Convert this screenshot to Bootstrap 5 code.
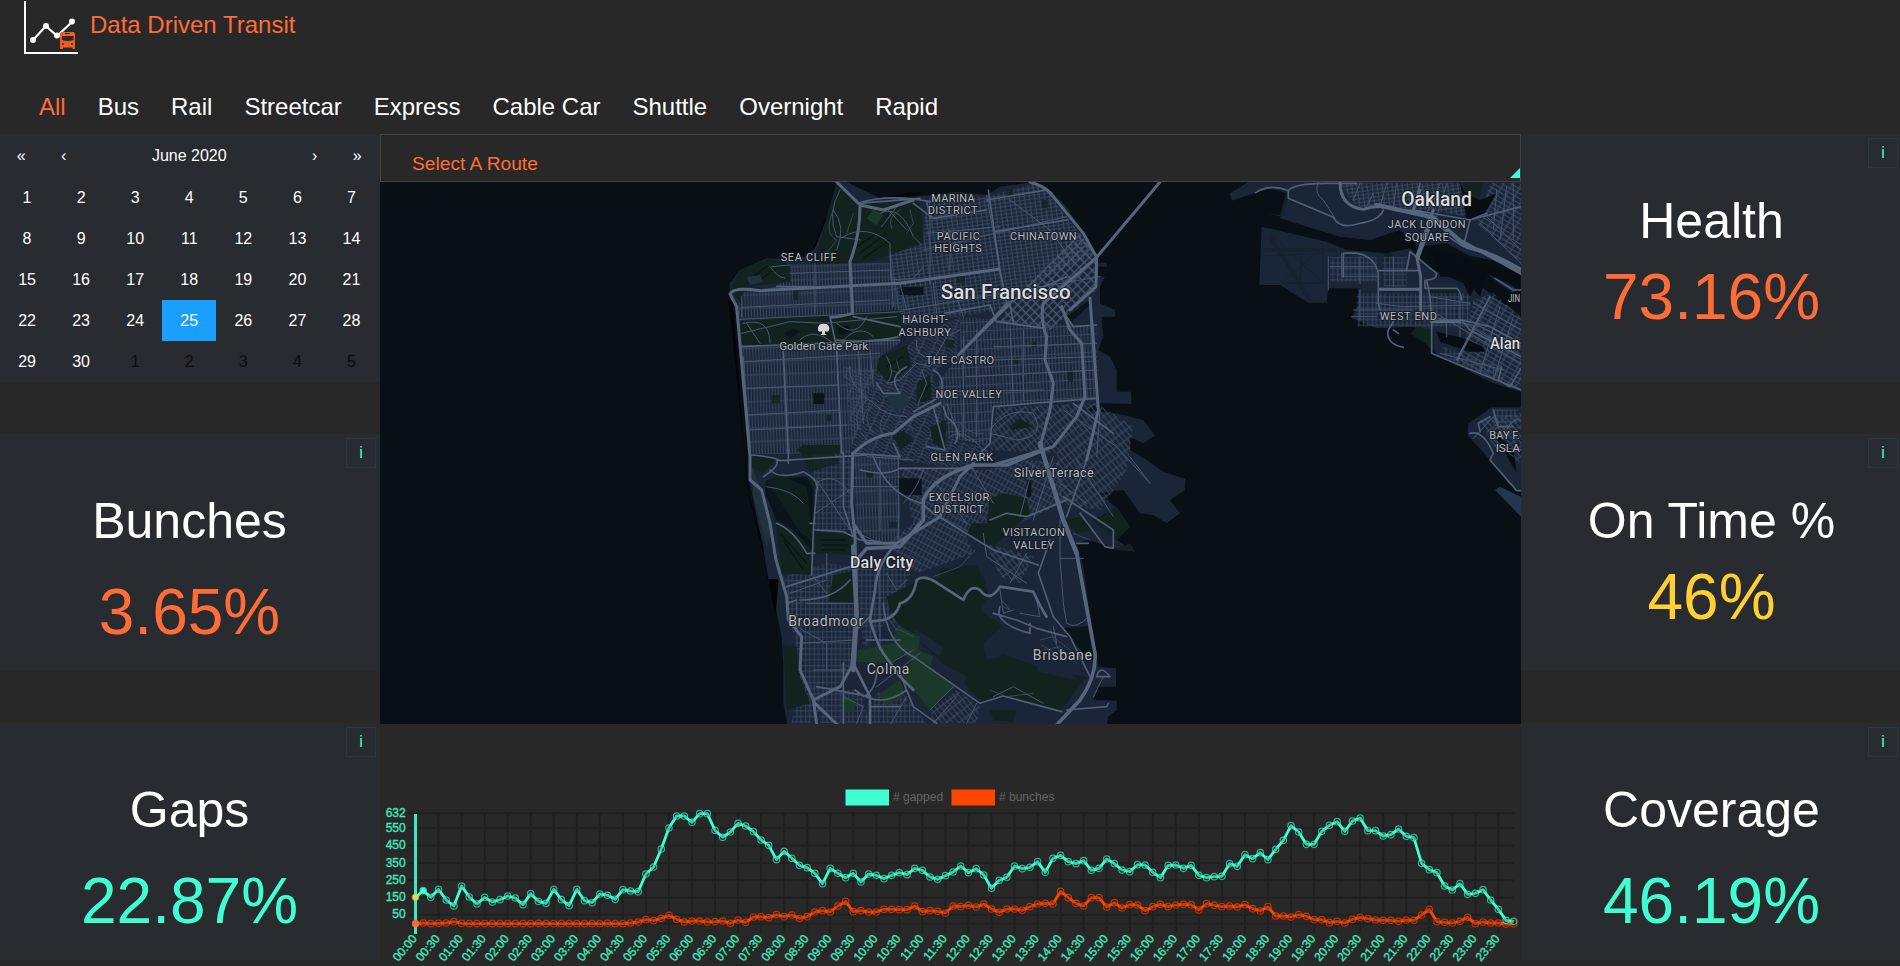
<!DOCTYPE html>
<html lang="en">
<head>
<meta charset="utf-8">
<title>Data Driven Transit</title>
<link href="https://cdn.jsdelivr.net/npm/bootstrap@5.3.0/dist/css/bootstrap.min.css" rel="stylesheet">
<style>
body{background:#282828;color:#fff;font-family:"Liberation Sans",Arial,sans-serif;font-size:16px;overflow:hidden;height:966px}
.brandbar{height:80px;padding-left:24px}
.brandbar svg{width:56px;height:56px;flex:none}
.brandbar h1{font-size:24px;line-height:28px;color:#ff6c37;margin:11px 0 0 10px;font-weight:400}
.modes{height:54px;padding:12px 0 0 23px}
.modes .nav-link{color:#fff;font-size:24px;line-height:30px;padding:0 16px}
.modes .nav-link.active{color:#ff6c37}
.board{height:832px;width:1902px}
.side{width:380px;gap:52px}
.side.right{width:381px}
.middle{width:1141px}
.panel{background:#282b30;position:relative;text-align:center;height:237px;padding-top:57px}
.panel.first-row{height:248px}
.panel h2{font-size:50px;line-height:60px;margin:0;font-weight:400}
.panel p{font-size:64px;line-height:74px;margin:0;padding-top:24px}
.panel.tight p{padding-top:9px}
.left .panel{padding-right:1px}
.orange{color:#ff6c37}.mint{color:#3fffd0}.gold{color:#ffcf33}
.info-btn{position:absolute;top:4px;right:4px;width:30px;height:30px;border:1px solid #29383b;color:#3fffd0;background:none;border-radius:0;padding:0;font-size:16px;line-height:26px}
.cal{background:#282b30;height:248px;padding-right:1.5px}
.cal-head{height:43px;line-height:44px;text-align:center}
.cal-head span{width:42.500px}
.cal-grid{display:grid;grid-template-columns:repeat(7,1fr);grid-auto-rows:41px;text-align:center;line-height:41px}
.cal-grid .out{color:#0c0d0e}
.cal-grid .on{background:#1a9fff}
.route{height:48px;border:1px solid #444;color:#ff6c37;font-size:19.2px;line-height:22px;padding:18px 0 0 31px;position:relative}
.route::after{content:"";position:absolute;right:0;bottom:3px;border-left:10px solid transparent;border-bottom:10px solid #3fffd0}
.middle svg{display:block}
#map text{font-family:Roboto,"Open Sans",sans-serif;fill:#b9bbbd;font-size:33px;text-anchor:middle;paint-order:stroke;stroke:#111923;stroke-width:5px;stroke-linejoin:round}
#map .town{font-size:42px}#map .city{font-weight:500;fill:#dcdcdc}
#map text.st{text-anchor:start}
.major,.mid,.fine{fill:none;stroke:#56657b;stroke-linejoin:round;stroke-linecap:round}
.major{stroke-width:9}.mid{stroke-width:5;stroke:#505f76}.fine{stroke-width:3;stroke:#485770}
#chart text{font-family:"Liberation Sans",Arial,sans-serif;font-size:12px}
#chart .tick{fill:#3fe8bd;stroke:#3fe8bd;stroke-width:.35px}
#chart .key{fill:#666}
</style>
<script src="https://cdn.jsdelivr.net/npm/bootstrap@5.3.0/dist/js/bootstrap.bundle.min.js"></script>
</head>
<body>
<header>
  <div class="brandbar d-flex align-items-start">
    <svg viewBox="24 0 56 56"><path d="M25 1V53H78" fill="none" stroke="#fff" stroke-width="2"/><path d="M33 40 46 26 57 36 72 22" fill="none" stroke="#fff" stroke-width="2.2"/><g fill="#fff"><circle cx="33" cy="40" r="3"/><circle cx="46" cy="26" r="3"/><circle cx="57" cy="35.500" r="3"/><circle cx="72" cy="21.500" r="3"/></g><path fill="#f15a22" d="M61 32H74L75 34V49H72.500V47.500H63V49H60V34Z"/><path fill="#282828" d="M65 33H70V34H65ZM62 36H73.500V40Q68 42 62 40Z"/><circle cx="63" cy="44" r=".9" fill="#282828"/><circle cx="72" cy="44" r=".9" fill="#282828"/></svg>
    <h1>Data Driven Transit</h1>
  </div>
  <nav class="nav modes">
    <a class="nav-link active">All</a><a class="nav-link">Bus</a><a class="nav-link">Rail</a><a class="nav-link">Streetcar</a><a class="nav-link">Express</a><a class="nav-link">Cable Car</a><a class="nav-link">Shuttle</a><a class="nav-link">Overnight</a><a class="nav-link">Rapid</a>
  </nav>
</header>
<main class="board d-flex">
  <aside class="side left d-flex flex-column">
    <div class="cal">
      <div class="cal-head d-flex"><span>«</span><span>‹</span><div class="flex-fill">June 2020</div><span>›</span><span>»</span></div>
      <div class="cal-grid" id="days"></div>
    </div>
    <div class="panel"><button class="info-btn">i</button><h2>Bunches</h2><p class="orange">3.65%</p></div>
    <div class="panel"><button class="info-btn">i</button><h2>Gaps</h2><p class="mint">22.87%</p></div>
  </aside>
  <section class="middle">
    <div class="route">Select A Route</div>
    <svg id="map" width="1141" height="542" viewBox="380 182 1141 542">
      <defs>
        <pattern id="sunset" width="9" height="40" patternUnits="userSpaceOnUse" patternTransform="rotate(-2)"><path d="M4 0V40M0 20H9" stroke="#3a4961" stroke-width="2.800"/></pattern>
        <pattern id="north" width="15" height="11" patternUnits="userSpaceOnUse" patternTransform="rotate(-8)"><path d="M7 0V11M0 5H15" stroke="#3d4c64" stroke-width="2.600"/></pattern>
        <pattern id="soma" width="21" height="17" patternUnits="userSpaceOnUse" patternTransform="rotate(-45)"><path d="M10 0V17M0 8H21" stroke="#4a5971" stroke-width="3.800"/></pattern>
        <pattern id="mission" width="10" height="27" patternUnits="userSpaceOnUse" patternTransform="rotate(-3)"><path d="M5 0V27M0 13H10" stroke="#3d4c64" stroke-width="2.700"/></pattern>
        <pattern id="hills" width="34" height="30" patternUnits="userSpaceOnUse" patternTransform="rotate(25)"><path d="M0 5Q17-6 34 5M0 15Q17 4 34 15M0 25Q17 14 34 25M8 0Q15 15 8 30" fill="none" stroke="#3c4b63" stroke-width="2.400"/></pattern>
        <pattern id="south" width="12" height="19" patternUnits="userSpaceOnUse" patternTransform="rotate(28)"><path d="M6 0V19M0 9H12" stroke="#3c4b63" stroke-width="2.600"/></pattern>
        <pattern id="east" width="13" height="24" patternUnits="userSpaceOnUse" patternTransform="rotate(-38)"><path d="M6 0V24M0 9H13" stroke="#3e4d65" stroke-width="2.600"/></pattern>
        <pattern id="eastbay" width="13" height="24" patternUnits="userSpaceOnUse" patternTransform="rotate(-60)"><path d="M6 0V24M0 9H13" stroke="#3e4d65" stroke-width="2.800"/></pattern>
        <pattern id="suburb" width="26" height="17" patternUnits="userSpaceOnUse"><path d="M5 0V17M17 0V17M0 8H26" stroke="#3a4961" stroke-width="2.500"/></pattern>
      </defs>
      <rect x="380" y="182" width="1141" height="542" fill="#080f15"/>
      <g transform="translate(700 170) scale(.33333)">
        <path fill="#020406" d="M84 370 100 415 133 850 143 960 185 1110 205 1235 205 1225H240L250 1300 225 1330 190 1150 147 980ZM378 140 340 235 352 240 385 160ZM480 60 540 86 620 70 680 68 560 92 490 75Z"/>
        <path fill="#1a2537" d="M410 36 378 150 345 235 300 270 200 265 120 300 90 340 88 372 105 410 120 530 135 700 148 860 150 940 170 1040 190 1130 205 1227H236L228 1320 245 1400 250 1480 250 1600 262 1665H1220L1225 1640 1250 1620V1592L1180 1590 1195 1550H1248V1495L1195 1490 1188 1440 1165 1300 1150 1190 1130 1120 1165 1110 1245 1135 1305 1145 1250 1110 1290 1070 1245 1010 1200 970 1270 960 1320 1030 1360 1035 1400 1060 1440 1030 1410 990 1455 960 1450 925 1390 905 1340 870 1290 840 1290 800 1330 820 1365 797 1330 750 1250 730 1150 720 1200 700 1295 702 1293 665 1250 665 1250 600 1230 560 1195 540 1210 500 1205 440 1245 440V420L1200 400 1200 350 1215 320 1195 318 1195 290 1220 290V278L1190 278 1190 255 1150 190 1100 110 1050 60 990 38 900 50 860 75 770 65 640 80 540 85 440 36Z"/>
        <path fill="url(#sunset)" d="M270 282 570 278 608 420 120 448 112 370 230 350ZM125 530 610 510 540 560 450 850 152 852ZM455 860H600V990L600 1115H540L470 1080Z"/>
        <path fill="url(#north)" d="M565 245 670 220 672 150 690 80 860 80 1000 42 1040 62 1185 250 1000 340 900 420 600 465 575 330Z"/>
        <path fill="url(#soma)" d="M1140 190 1190 260 1188 360 1050 480 900 460 925 400Z"/>
        <path fill="url(#mission)" d="M780 440 900 450 1190 470 1195 690 880 712 870 830 740 800 710 640 780 555Z"/>
        <path fill="url(#hills)" d="M430 590 560 600 650 500 780 440 770 560 700 610 740 800 870 840 800 900 460 850Z"/>
        <path fill="url(#south)" d="M600 890 860 900 980 870 1080 880 1085 1000 960 1060 800 1100 820 1150 650 1210 560 1120 640 1060Z"/>
        <path fill="url(#east)" d="M890 712 1190 700 1300 770 1280 900 1200 1020 1080 1000 1070 850 870 840ZM560 1340 610 1330 680 1390 670 1410 590 1390ZM860 1120 1000 1160 960 1240 900 1220ZM690 1620 770 1560 840 1610 830 1660 700 1660Z"/>
        <path fill="url(#suburb)" d="M340 850H455V1080H345ZM250 1220 380 1180 460 1190V1480L330 1660H275L300 1480 265 1330ZM470 1190 640 1180 600 1300 490 1440ZM530 1570 600 1560 680 1660H500ZM350 1560 480 1560 510 1660H360Z"/>
        <g fill="#12231f">
          <path d="M412 36 470 100 560 100 660 90 670 220 510 275 340 284 378 150ZM120 300 210 265 270 285 270 335 130 352 92 360ZM120 455 600 420 615 510 125 525ZM100 360 130 365 125 410ZM540 560 620 525 635 590 570 640 530 600ZM650 640 690 615 695 690 650 700ZM690 770 740 750 735 840 700 820ZM580 800 610 780 640 810 600 840ZM930 770 960 745 1000 770 930 780ZM290 840 310 825 420 825 420 850 310 855ZM152 850 230 865 190 910 155 890Z"/>
          <path d="M195 940 240 910 345 930 340 1120 335 1215 245 1210 228 1060ZM345 1085 455 1095 455 1155 345 1150ZM400 1215 455 1205 465 1298 385 1295ZM870 985 910 970 980 985 990 1030 880 1130 800 1095 815 1060 860 1060ZM720 1195 830 1185 850 1230 720 1250ZM560 1280 640 1240 650 1225 720 1225 850 1220 865 1275 840 1320 910 1370 850 1440 930 1460 1040 1500 1160 1520 1080 1625 900 1575 850 1600 740 1490 640 1400 590 1360 570 1320ZM250 1425 290 1430 300 1520 330 1600 260 1620ZM1095 1050 1140 1040 1185 1080 1130 1090ZM1250 1010 1290 1070 1250 1110 1180 1050ZM1290 1120 1305 1145 1240 1140ZM870 1620 950 1620 940 1655 880 1650Z"/>
          <path d="M280 360h16v30h-16ZM770 318h25v22h-25ZM920 60h20v20h-20ZM1025 90h18v25h-18ZM735 510h28v25h-28ZM995 515h16v16h-16ZM1105 600h14v35h-14ZM215 675h25v25h-25ZM380 735h14v18h-14ZM940 565h16v16h-16ZM500 905h18v18h-18ZM570 1055h22v18h-22ZM330 905 420 880 400 850 300 845Z" opacity=".8"/>
        </g>
        <path fill="none" stroke="#0a1612" stroke-width="4" d="M480 250 560 190M490 265 570 210M470 230 530 190M240 1090 320 1180M250 1110 310 1200M360 1110H440M365 1125H445M365 1140H440M220 300 180 330M205 285 160 320M560 590 610 560M660 690 690 640"/>
        <path fill="#0a151b" d="M200 930 320 920 340 960 335 1140 280 1080 230 1050 195 970ZM340 670h32v32h-32ZM600 350h70v25h-70ZM250 490l30-15 20 10-30 20ZM412 475l30-10 15 20-40 10ZM980 930h14v50h-14ZM595 925h70v50h-70ZM1100 440 1170 390 1175 400 1110 460ZM1095 1373 1170 1368 1185 1480 1100 1400Z"/>
        <path fill="#12231f" d="M200 935 250 920 320 950 340 1120 300 1085 240 990Z" opacity=".75"/>
        <path fill="#1a2537" d="M850 1420 860 1470 900 1460 950 1400 905 1370ZM1010 1490 1100 1490 1130 1530 1015 1505ZM640 1375 730 1430 720 1460 650 1410ZM720 1520 745 1490 800 1520 790 1550Z"/>
        <path fill="#1c3829" d="M500 145 520 118 550 135 530 165ZM600 1370 660 1400 655 1440 700 1460 690 1490 640 1480 575 1410ZM475 1440 605 1415 615 1450 570 1480 470 1475ZM650 1465 765 1550 690 1620 600 1510ZM535 1575 600 1530 615 1575 560 1610ZM430 1590 465 1585V1625H430Z"/>
        <path fill="#203240" d="M560 675 610 665 630 700 600 725 570 710ZM140 320 180 315 190 335 150 345ZM1145 505h25v25h-25ZM155 890 185 960 215 1080 200 1130 160 980Z"/>
        <g class="fine">
          <path d="M420 60Q380 130 410 200L480 210M400 120Q440 170 410 240M430 200Q500 160 570 220L572 330 640 325 670 290M540 130Q600 100 640 200L665 225M565 120 620 180M590 110 545 170M210 290Q230 320 255 325M215 290 270 285M125 490 270 455 375 460 590 440M140 460 180 520M130 460Q210 440 210 520M300 510Q340 470 400 520M410 460Q470 510 500 440M430 510Q480 460 520 500M120 448 608 425M128 412 570 390M125 378V440M270 310 570 300M345 280V430M570 250 580 410M600 340 620 420M135 575 540 550M138 655 415 645M145 735 420 720M150 780 440 765M510 540 520 650M130 560 150 840M475 530 490 760M860 75 905 330M750 180V300M690 120V340M670 240 1100 140M680 190 900 170M930 90 1050 180 1100 250M610 420 1200 320M760 350 790 440M700 340 710 430M790 500V800M830 480V800M930 470 940 700M970 480V690M880 530 1190 520M880 570 1190 560M800 620 1190 600M720 665 1030 660M650 510Q640 580 740 560M560 560Q590 610 560 640L600 630 650 580 690 590 740 500 780 480M450 590Q440 640 520 700Q560 740 620 740M655 700 680 640 665 600M740 700 780 800M750 800Q790 770 850 840M870 780Q920 710 1000 730Q1040 800 950 810L870 790M610 1000Q650 960 670 900M455 950H590M540 870V1080M595 850V1110M500 860 640 870M455 1080 540 1120M350 930 450 1080M345 1030 450 960M350 940Q400 900 450 970M200 950Q280 960 310 1000M700 930 800 1060M820 900 880 1000M1000 880 960 1040M1060 860 1000 1050M1200 720 1190 860M1090 720 1250 830 1350 940M1130 870 1240 1040M1290 860 1350 940M1080 940 1160 1000M850 1090 860 1160 980 1240M980 1150 930 1240M1080 1050V1165H1150M1080 1165 1090 1300 1100 1360Q1130 1380 1165 1340M900 1260 910 1330 940 1320M1010 1290 1020 1340 960 1330M560 1210 590 1260 620 1230M270 1270 380 1230V1150M290 1290V1370L380 1420V1500M320 1300 460 1300M300 1420 460 1410M340 1500 460 1500M380 1270 340 1220M540 1200V1440M570 1480 640 1440M530 1550 660 1450M690 1620 760 1550M1070 1420 1060 1370M880 1580 940 1550 1030 1600M800 1660 830 1600M430 1580 490 1610 470 1660M700 1660 770 1580M1180 1580 1210 1520M570 1665 620 1580"/>
          <path d="M400 120Q370 190 410 210L380 250M460 130 440 190M600 120Q560 140 575 175M630 120 640 160 620 190M590 570 600 610 570 600M590 760Q610 740 640 780M500 690Q440 740 500 810M520 700Q480 740 520 790M560 720Q520 780 560 800M765 780Q810 830 850 810M780 760Q820 800 850 790M1020 1410 1060 1400 1110 1440M1030 1440 1080 1430 1130 1480M1050 1380 1080 1450M1025 1425 1100 1470M870 1560 920 1580 1000 1570M905 1290 930 1320 910 1310M1120 1090 1170 1110M600 1380 640 1400M700 1220 780 1190 825 1140" stroke-width="2"/>
        </g>
        <g class="mid">
          <path d="M230 350 340 350M475 100 660 85M475 100Q560 70 690 95M640 100 700 145 860 120M860 90 1040 60M680 95 690 145M885 185 1100 150M865 60 900 300 920 400M410 540 425 850M120 530 600 510M250 540 265 860M390 440 405 510 410 540M600 470 460 440M600 500Q500 520 410 510M735 430 870 405 890 455 1035 475M780 550 920 400 1100 320M930 400 940 460M1080 410 1120 470 1190 465M700 600Q740 620 720 680L640 725M620 590Q560 620 600 670L550 670 530 640M730 710 740 740Q790 780 765 820M700 710 735 840 680 830M880 710 870 820 840 850M880 710 1060 695 1190 685M1120 700 1240 790M460 850 600 860 580 820M155 855Q220 860 240 872L500 855M265 840V880M430 850V1010L460 1100M345 1080 430 1085 480 1110 540 1115M190 920Q240 890 230 870M210 900Q240 930 310 905Q360 930 350 960L340 1080 335 1215M230 1060Q280 1080 320 1150L345 1150M260 1250 450 1190M520 860Q560 970 665 1000L700 1030 880 1140 1015 1185M480 900Q560 920 600 895H820M870 1050 920 1030 980 1040 1100 990M1160 870 1100 1040M1090 980 1240 1080V1135L1215 1130 1140 1030M1130 1120H1165M880 1330 950 1350 1010 1375 1100 1400M900 1310Q880 1360 990 1390V1360M1050 1110 1015 1210 1060 1340 1110 1400 1170 1520M350 1550 510 1580M290 1290 260 1300M550 1300Q560 1420 640 1460L840 1600 910 1578 1085 1625M465 1560Q540 1620 620 1560M600 1510 640 1610 710 1660M500 1410H600M470 1380 510 1340M430 1480V1660M1190 1520Q1200 1480 1230 1520H1190M1100 1620 1220 1610 1225 1600M510 1610 600 1610"/>
          <path d="M330 1060H345M490 1580Q530 1560 530 1500M300 1290Q400 1290 450 1230"/>
        </g>
        <g class="major">
          <path d="M410 36 480 105Q480 200 450 275L458 430M90 372Q100 350 180 362L600 340 895 298M90 372 110 410 150 860 150 930 185 960 210 1060 228 1170 260 1280 265 1350 305 1400 300 1500 345 1600 410 1662M458 430Q420 440 395 442M480 105 550 120 640 90M1380 36 1190 262 1030 400Q1020 450 1040 500L1035 570 1060 640 1050 720 1020 830M990 36Q1040 50 1060 80L1150 190 1190 262 1188 350 1110 420M775 555 925 405M1085 410 1110 480 1145 520 1155 680M1170 385 1195 720 1160 870M1155 680 1130 740 1060 830 880 885M460 850Q510 800 580 790L640 740Q700 710 720 700M458 850 455 1000 465 1100 470 1300 455 1490 420 1550 340 1590 350 1662M460 1060 500 1120H590L720 1040 780 920 820 880"/>
          <path stroke-width="8" d="M590 1120Q530 1180 525 1260L510 1350Q530 1420 550 1450L600 1520M640 1560 600 1520M510 1355 550 1350Q590 1340 600 1300 640 1290 650 1230 675 1210 720 1245L790 1290Q810 1240 840 1260 870 1300 900 1250L1000 1265Q1020 1310 1040 1340M460 1480 510 1580V1660"/>
          <path stroke-width="14" d="M460 1130 470 1330 460 1500M1020 820 1090 1050 1130 1150"/>
          <path stroke-width="11" d="M1130 1150 1185 1450Q1190 1520 1140 1590L1070 1665M1020 845 920 885H820Q700 920 670 990L670 1050 600 1130 500 1135 470 1170"/>
        </g>
        <text x="759" y="96" textLength="130">MARINA</text><text x="758" y="133" textLength="150">DISTRICT</text><text x="775" y="209" textLength="130">PACIFIC</text><text x="774" y="246" textLength="143">HEIGHTS</text><text x="1030" y="210" textLength="200">CHINATOWN</text><text x="326" y="273" textLength="168">SEA CLIFF</text><text x="675" y="460" textLength="137">HAIGHT-</text><text x="674" y="498" textLength="157">ASHBURY</text><text x="371" y="539" textLength="267" style="font-size:35px">Golden Gate Park</text><text x="780" y="581" textLength="205">THE CASTRO</text><text x="806" y="683" textLength="199">NOE VALLEY</text><text x="785" y="873" textLength="187">GLEN PARK</text><text x="1061" y="920" textLength="240" style="font-size:38px">Silver Terrace</text><text x="777" y="993" textLength="182">EXCELSIOR</text><text x="776" y="1030" textLength="150">DISTRICT</text><text x="1001" y="1099" textLength="187">VISITACION</text><text x="1001" y="1137" textLength="122">VALLEY</text>
        <text class="city" x="917" y="386" textLength="390" style="font-size:62px">San Francisco</text><text class="city" x="545" y="1195" textLength="190" style="font-size:48px">Daly City</text><text class="town" x="377" y="1368" textLength="225">Broadmoor</text><text class="town" x="1087" y="1469" textLength="177">Brisbane</text><text class="town" x="564" y="1511" textLength="128">Colma</text>
        <path fill="#d5d6d8" stroke="#111923" stroke-width="3" paint-order="stroke" d="M366 491V484Q352 488 354 474 356 460 371 461 386 460 388 474 388 488 375 484V491L380 495H361Z"/>
      </g>
      <g transform="translate(1180 130) scale(.33333)">
        <path fill="#1a2537" d="M150 190 205 156H1023V430L990 400 870 378 800 340 720 350 660 300 570 330 480 320 300 265 320 190 270 175 155 212ZM245 290 440 335 500 360 620 370 690 355 760 420 850 460 870 500 890 460 1023 560V785L940 760 770 675 750 620 700 590 590 595 515 565 535 520V475H445L440 518H385L300 465H238ZM935 832H1023V1085L985 1060 930 990 862 915 865 880ZM925 420Q960 420 1010 480L1000 490 930 440ZM0 1045H18L12 1080H0Z"/>
        <path fill="#22364f" d="M945 1080 960 1070 1023 1100V1160Z"/>
        <path fill="#12231f" d="M320 180 300 255 255 250 305 260 325 200ZM850 156H910L900 200 855 190ZM690 610 710 590 760 600 765 670 735 640ZM750 475H840V490H750ZM490 362 520 370 500 380ZM610 370 640 370 620 395Z"/>
        <path fill="url(#eastbay)" d="M930 160H1023V400L890 280ZM880 510 940 490 1023 560V780L840 700Z"/>
        <path fill="url(#east)" d="M900 870 1023 850V1000L940 950Z"/>
        <path fill="url(#north)" d="M480 160H840L860 260 760 240 530 230Z"/><path fill="url(#suburb)" d="M450 380H590V455H450ZM610 380H680V470H610ZM530 490H870V590H530ZM790 650 960 710 950 750 790 680ZM940 838H1015V880H940Z"/>
        <path fill="#060e13" d="M840 156 855 190 900 210 950 190 920 240 910 265 860 270ZM750 355 900 400 1023 430V480L920 430 900 500 850 440 780 440ZM935 900Q970 930 1000 960L1010 1030ZM770 605 850 625 910 650 915 665 870 665 780 635Z"/>
        <path d="M270 320 390 510M250 360H470" stroke="#18222e" stroke-width="12" fill="none"/><path d="M310 455 430 350V460L280 320M245 378 430 370M365 365 360 460M310 460H430" stroke="#172230" stroke-width="3" fill="none"/>
        <g class="fine"><path d="M415 156Q400 190 430 210L465 265M445 380V480M450 410H590M485 370V440H590M540 380V460M640 380V470M590 520 670 530 870 525M520 540H700M540 480V570M515 560H590M750 500 870 520M750 540 1023 700M750 560 900 590 1023 650M800 500V620M840 500V620M930 500 830 700M960 530 900 730M1000 560 940 750M870 590 1023 680M780 670 970 720M880 520 1023 600M900 280 1023 400M920 260 1023 360M950 180 940 300M980 170 960 330M1000 160V330M580 190 560 230M620 160 600 230M650 160 640 230M540 160 520 210M780 160 740 250M800 160 770 260M880 925 940 860 955 890 930 910M930 920 1000 980M980 900Q1000 860 1023 870M950 950 1023 960"/></g>
        <g class="mid"><path d="M227 188Q270 160 325 182V205L460 262Q480 300 540 280 600 270 610 240M325 182Q340 160 440 160L530 160M490 440V370Q580 360 595 430V520L600 540M680 420 690 365 770 430Q770 450 740 450L750 500 755 570V670L850 710 1023 780M595 422H720M735 450V475H830Q840 480 845 510M640 575 625 600Q615 640 670 652M640 600 655 610M845 570 930 590 1023 640M780 570H845L870 600 1023 680M930 500 830 690M965 710 955 750 990 770 1023 715M720 160 700 240 870 270 1023 230M790 310 850 350 870 270 920 250M945 445 1000 480 1023 480M930 860 895 880 900 905M870 910Q910 900 940 970L930 990 1010 1082H1023M940 840 955 890 1000 890"/></g>
        <g class="major"><path d="M480 156Q480 230 550 238 600 220 650 240L720 245 840 330 1023 430M720 180 700 240M760 240 710 380 722 440V560M745 300 712 390M600 478H722M755 575H840"/><path stroke-width="13" d="M590 225 760 262 860 350Q940 370 1023 420"/></g>
        <text class="city" x="770" y="228" textLength="212" style="font-size:58px">Oakland</text><text x="740" y="295" textLength="233">JACK LONDON</text><text x="740" y="332" textLength="132">SQUARE</text><text x="685" y="571" textLength="172">WEST END</text><text class="st" x="984" y="516" textLength="36" lengthAdjust="spacingAndGlyphs">JIN</text><text class="st city" x="930" y="657" textLength="90" lengthAdjust="spacingAndGlyphs" style="font-size:48px">Alan</text><text class="st" x="928" y="927" textLength="92" lengthAdjust="spacingAndGlyphs">BAY F.</text><text class="st" x="947" y="965" textLength="73" lengthAdjust="spacingAndGlyphs">ISLA</text>
      </g>
    </svg>
    <svg id="chart" width="1141" height="242" viewBox="380 724 1141 242"></svg>
  </section>
  <aside class="side right d-flex flex-column">
    <div class="panel first-row tight"><button class="info-btn">i</button><h2>Health</h2><p class="orange">73.16%</p></div>
    <div class="panel tight mt-n1px"><button class="info-btn">i</button><h2>On Time %</h2><p class="gold">46%</p></div>
    <div class="panel"><button class="info-btn">i</button><h2>Coverage</h2><p class="mint">46.19%</p></div>
  </aside>
</main>
<script>
// Calendar: June 2020 plus the first days of July
let days = '';
for (let d = 1; d <= 35; d++) days += `<div class="${d > 30 ? 'out' : d === 25 ? 'on' : ''}">${d > 30 ? d - 30 : d}</div>`;
document.getElementById('days').innerHTML = days;

// Chart series: one sample each ten minutes, as depth below the chart's top
const gapped = [412,392,412,388,420,438,378,411,432,412,426,419,408,414,434,401,424,430,388,419,437,388,422,428,402,406,418,389,393,395,342,321,267,204,168,168,187,161,161,211,232,216,190,198,215,240,256,299,274,295,316,323,340,371,325,340,353,340,366,342,346,356,346,338,344,325,331,351,358,347,336,318,338,326,345,385,361,352,318,326,322,305,337,295,286,305,311,302,331,325,297,311,330,335,314,315,337,353,316,315,325,316,346,353,350,349,311,319,284,296,278,299,268,241,197,216,253,253,214,196,185,214,183,174,212,212,228,224,207,229,233,310,329,338,378,390,371,403,400,389,420,448,481,484];
const bunched = [491,489,491,490,489,485,490,491,491,491,491,491,491,491,491,491,490,491,491,491,491,491,491,491,491,490,491,491,489,486,479,482,475,466,478,486,483,483,486,485,483,490,480,487,471,470,473,464,470,465,475,470,456,452,456,438,424,455,452,456,456,448,448,449,449,438,455,452,454,459,438,440,436,441,432,447,457,447,447,451,440,432,430,432,394,413,430,438,413,413,441,428,444,434,435,452,440,433,440,435,433,434,450,431,436,440,438,441,434,446,453,440,468,468,471,464,469,479,479,488,484,489,478,472,476,480,481,481,484,480,481,465,448,485,487,489,484,472,491,486,489,489,492,491];
const X = i => 415.5 + i * 7.68, Y = v => 760 + v / 3;
let s = '';
for (const [n, v] of [[632,160],[550,204],[450,257],[350,309],[250,361],[150,413],[50,464],['',491]]) {
  s += `<path d="M408 ${Y(v)}H1514" stroke="#202020" stroke-width="2"/>`;
  if (n) s += `<text class="tick" text-anchor="end" x="405.700" y="${Y(v) + 3.8}">${n}</text>`;
}
for (let i = 0; i < 144; i += 3) {
  s += `<path d="M${X(i)} 814V933" stroke="#202020" stroke-width="2"/>`;
  const t = String(i / 6 | 0).padStart(2, '0') + (i % 6 ? ':30' : ':00');
  s += `<text class="tick" text-anchor="end" transform="translate(${X(i) + 2} 939) rotate(-50)">${t}</text>`;
}
s += `<path d="M415.500 814V934" stroke="#3fe8bd" stroke-width="3"/>`;
for (const [data, c] of [[bunched, '#ff4500'], [gapped, '#3fffd0']]) {
  s += `<polyline fill="none" stroke="${c}" stroke-width="2.800" stroke-linejoin="round" points="${data.map((v, i) => X(i) + ',' + Y(v)).join(' ')}"/>`;
  s += data.map((v, i) => `<circle cx="${X(i)}" cy="${Y(v)}" r="3.200" fill="rgba(0,0,0,.18)" stroke="${c}" stroke-opacity=".65" stroke-width="1.200"/>`).join('');
}
s += `<circle cx="415.500" cy="${Y(412)}" r="3" fill="#ffcf33"/><circle cx="415.500" cy="${Y(491)}" r="3.500" fill="#ff6c37"/><circle cx="423.200" cy="${Y(392)}" r="3" fill="#3fffd0"/>`;
s += `<rect x="845.500" y="789.500" width="43.500" height="16" fill="#3fffd0"/><rect x="951.500" y="789.500" width="43.500" height="16" fill="#ff4500"/>`;
s += `<text class="key" x="893" y="801">#&#160;gapped</text><text class="key" x="999" y="801">#&#160;bunches</text>`;
document.getElementById('chart').innerHTML = s;
</script>
</body>
</html>
